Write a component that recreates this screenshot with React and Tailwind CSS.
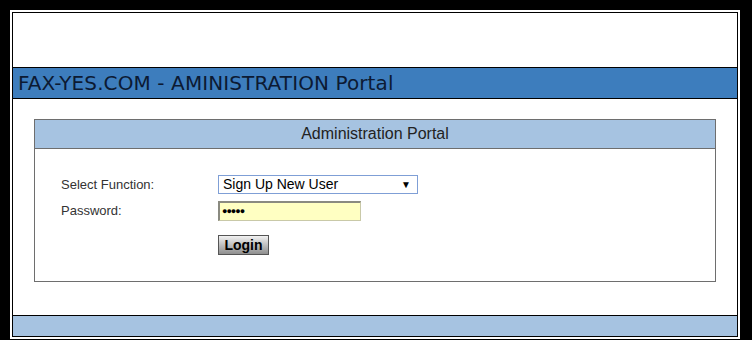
const App = () => {
  return (
    <div className="min-h-screen bg-black pt-[10px] pl-[10px] pr-[12px]">
      <div className="bg-white p-[2px]">
        <div className="border border-black">
          <div className="h-[54px]" />

          <header className="border-y border-black bg-[#3d7dbd] h-[32px] flex items-center px-[5px]">
            <h1 className="text-[20px] text-[#0c1a33] tracking-[0.1px] font-['DejaVu_Sans',sans-serif] leading-none">
              FAX-YES.COM - AMINISTRATION Portal
            </h1>
          </header>

          <main className="pl-[21px] pr-[21px] pt-[20px] pb-[33px] font-['Liberation_Sans',Arial,sans-serif]">
            <section className="border border-[#6e6e6e]">
              <div className="h-[29px] bg-[#a6c3e1] border-b border-[#6e6e6e] flex items-center justify-center">
                <h2 className="text-[16px] text-[#222]">Administration Portal</h2>
              </div>

              <form className="pl-[26px] pt-[26px] h-[132px] text-[13px] text-[#333]">
                <div className="flex items-center h-[19px]">
                  <label className="w-[157px]">Select Function:</label>
                  <div className="w-[200px] h-[19px] border border-[#7f9fd6] bg-white flex items-center justify-between px-[4px] text-[14px] text-black">
                    <span>Sign Up New User</span>
                    <span className="text-[10px] pr-[2px]">▼</span>
                  </div>
                </div>

                <div className="flex items-center h-[20px] mt-[7px]">
                  <label className="w-[157px]">Password:</label>
                  <div className="w-[143px] h-[20px] bg-[#ffffc2] border border-[#c9c9a8] border-t-[#8a8a80] border-l-[#8a8a80] border-t-2 border-l-2 flex items-center px-[2px]">
                    <span className="text-[9px] text-black leading-none tracking-[-1px]">●●●●●</span>
                  </div>
                </div>

                <div className="flex mt-[14px] pl-[157px]">
                  <button
                    type="button"
                    className="w-[51px] h-[20px] border border-[#555] bg-gradient-to-b from-[#f2f2f2] to-[#8f8f8f] text-[14px] font-bold text-black leading-none"
                  >
                    Login
                  </button>
                </div>
              </form>
            </section>
          </main>

          <footer className="border-t border-black bg-[#a6c3e1] h-[21px]" />
        </div>
      </div>
    </div>
  );
};

export default App;
